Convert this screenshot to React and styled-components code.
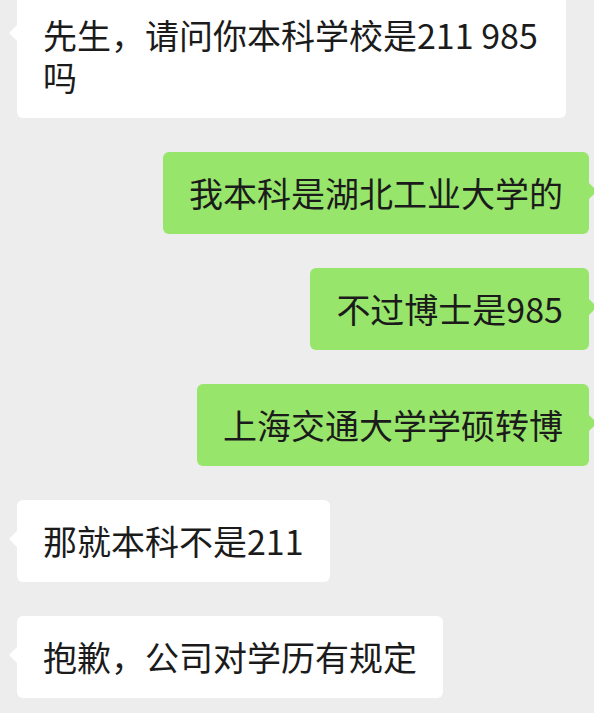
import React from "react";
import styled, { createGlobalStyle } from "styled-components";

const Global = createGlobalStyle`
  html, body { margin: 0; padding: 0; background: #ededed; }
  body { font-family: "Noto Sans CJK SC", "Noto Sans", sans-serif; }
`;

const Chat = styled.div`
  width: 594px;
  height: 713px;
  overflow: hidden;
  background: #ededed;
  display: flex;
  flex-direction: column;
  gap: 34px;
  box-sizing: border-box;
  margin-top: -6px;
`;

const Row = styled.div`
  display: flex;
  justify-content: ${(p) => (p.$mine ? "flex-end" : "flex-start")};
  padding: ${(p) => (p.$mine ? "0 5px 0 0" : "0 0 0 17px")};
`;

const Bubble = styled.div`
  position: relative;
  max-width: 549px;
  box-sizing: border-box;
  padding: 20px 26px;
  border-radius: 6px;
  background: ${(p) => (p.$mine ? "#98e56b" : "#ffffff")};
  color: #1b1b1b;
  font-size: 34px;
  line-height: 42px;
  word-break: break-all;

  &::before {
    content: "";
    position: absolute;
    top: 31px;
    ${(p) => (p.$mine ? "right: -8px;" : "left: -8px;")}
    width: 0;
    height: 0;
    border-top: 8px solid transparent;
    border-bottom: 8px solid transparent;
    ${(p) =>
      p.$mine
        ? "border-left: 8px solid #98e56b;"
        : "border-right: 8px solid #ffffff;"}
  }
`;

const messages = [
  { mine: false, text: "先生，请问你本科学校是211 985吗" },
  { mine: true, text: "我本科是湖北工业大学的" },
  { mine: true, text: "不过博士是985" },
  { mine: true, text: "上海交通大学学硕转博" },
  { mine: false, text: "那就本科不是211" },
  { mine: false, text: "抱歉，公司对学历有规定" },
];

export default function App() {
  return (
    <>
      <Global />
      <Chat>
        {messages.map((m, i) => (
          <Row key={i} $mine={m.mine}>
            <Bubble $mine={m.mine}>{m.text}</Bubble>
          </Row>
        ))}
      </Chat>
    </>
  );
}
